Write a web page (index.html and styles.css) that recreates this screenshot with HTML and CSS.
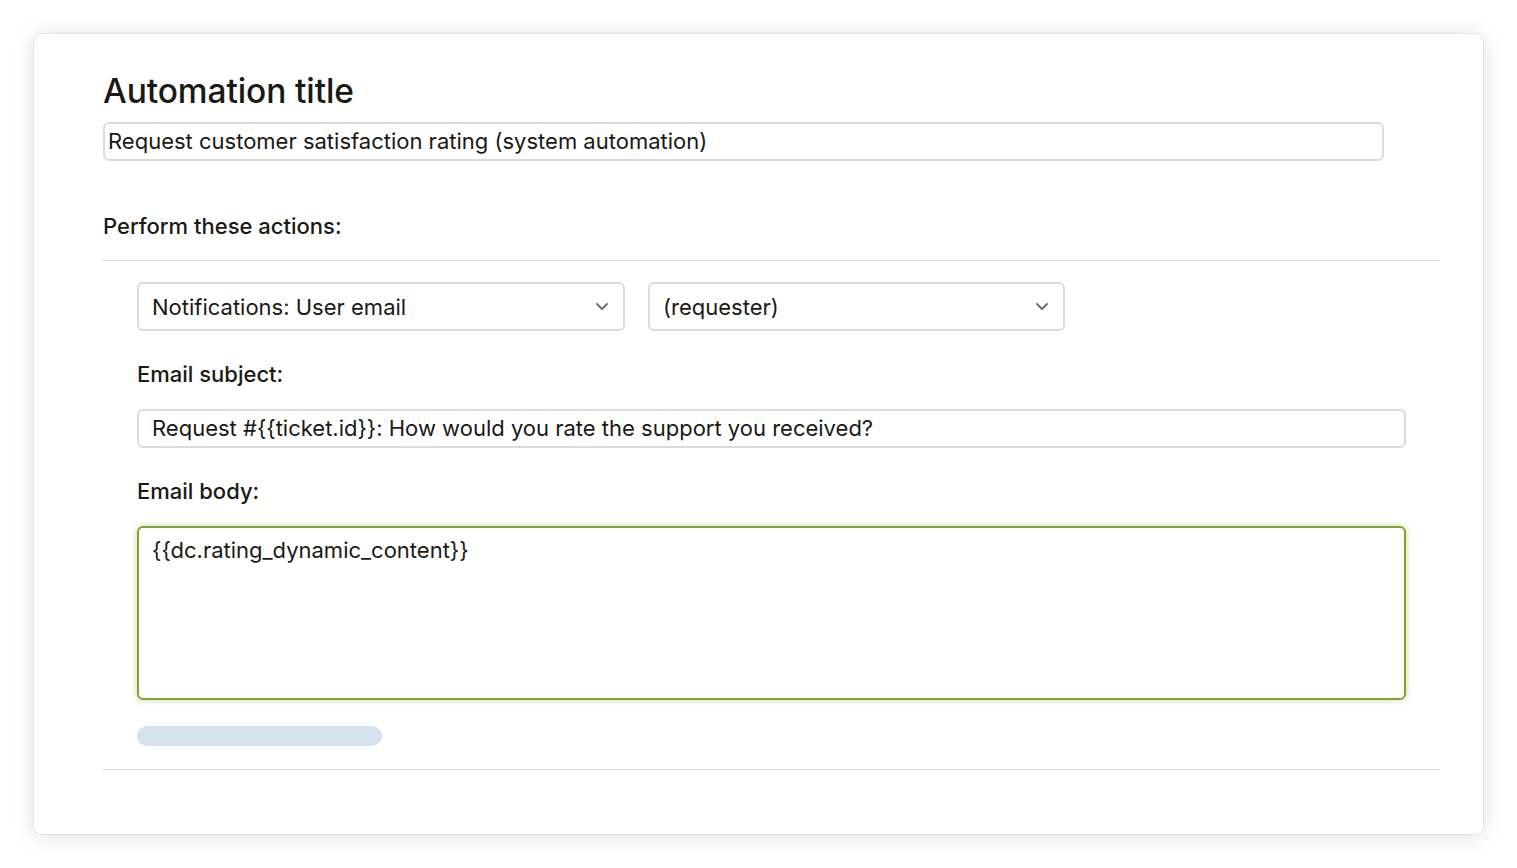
FILE: index.html
```html
<!DOCTYPE html>
<html lang="en">
<head>
<meta charset="utf-8">
<title>Automation</title>
<link rel="stylesheet" href="styles.css">
</head>
<body>
<main class="card">
  <h1 class="title">Automation title</h1>
  <div class="field title-field">Request customer satisfaction rating (system automation)</div>
  <div class="label section-label">Perform these actions:</div>
  <hr class="rule">
  <section class="actions">
    <div class="select-row">
      <div class="select select-wide">
        <span>Notifications: User email</span>
        <svg class="chev" width="14" height="9" viewBox="0 0 14 9"><path d="M2 2l5 5 5-5" fill="none" stroke="#68737d" stroke-width="2" stroke-linecap="round" stroke-linejoin="round"/></svg>
      </div>
      <div class="select select-narrow">
        <span>(requester)</span>
        <svg class="chev" width="14" height="9" viewBox="0 0 14 9"><path d="M2 2l5 5 5-5" fill="none" stroke="#68737d" stroke-width="2" stroke-linecap="round" stroke-linejoin="round"/></svg>
      </div>
    </div>
    <div class="label sub-label">Email subject:</div>
    <div class="field subject-field">Request #{{ticket.id}}: How would you rate the support you received?</div>
    <div class="label sub-label">Email body:</div>
    <div class="textarea">{{dc.rating_dynamic_content}}</div>
    <div class="placeholder-bar"></div>
  </section>
  <hr class="rule bottom-rule">
</main>
</body>
</html>
```

FILE: styles.css
```css
html, body {
  margin: 0;
  padding: 0;
  background: #ffffff;
}
body {
  padding: 34px 0 34px 34px;
  font-family: Inter, "Noto Sans", sans-serif;
  color: #1a1916;
}
.card {
  box-sizing: border-box;
  width: 1449px;
  height: 800px;
  background: #ffffff;
  border-radius: 8px;
  box-shadow: 0 0 0 1px rgba(0,0,0,0.06), 0 2px 22px rgba(0,0,0,0.13);
  padding: 37px 43px 0 69px;
}
.title {
  margin: 0;
  font-size: 33.5px;
  line-height: 40px;
  font-weight: 500;
  letter-spacing: -0.1px;
}
.field {
  box-sizing: border-box;
  height: 39px;
  border: 2px solid #d8dcde;
  border-radius: 6px;
  font-size: 22px;
  line-height: 35px;
  white-space: nowrap;
}
.title-field {
  margin-top: 11px;
  width: 1281px;
  padding-left: 3px;
}
.label {
  font-size: 22px;
  line-height: 28px;
  font-weight: 500;
}
.section-label {
  margin-top: 51px;
}
.rule {
  margin: 0;
  border: 0;
  height: 1px;
  background: #dcdcdc;
  width: 1337px;
}
.section-label + .rule {
  margin-top: 20px;
}
.actions {
  padding: 21px 0 0 34px;
}
.select-row {
  display: flex;
  gap: 23px;
}
.select {
  box-sizing: border-box;
  height: 49px;
  border: 2px solid #d8dcde;
  border-radius: 6px;
  display: flex;
  align-items: center;
  justify-content: space-between;
  padding: 0 14px 0 13px;
  font-size: 22px;
}
.select-wide { width: 488px; }
.select-narrow { width: 417px; }
.chev { display: block; }
.sub-label {
  margin-top: 29px;
}
.subject-field {
  margin-top: 21px;
  width: 1269px;
  padding-left: 13px;
}
.textarea {
  box-sizing: border-box;
  margin-top: 21px;
  width: 1269px;
  height: 174px;
  border: 2px solid #7ea52c;
  border-radius: 6px;
  box-shadow: 0 0 6px rgba(126,165,44,0.45);
  padding: 8px 13px;
  font-size: 22px;
  line-height: 28px;
}
.placeholder-bar {
  margin-top: 26px;
  width: 245px;
  height: 20px;
  border-radius: 10px;
  background: #d6e2f0;
}
.bottom-rule {
  margin-top: 23px;
}
```
